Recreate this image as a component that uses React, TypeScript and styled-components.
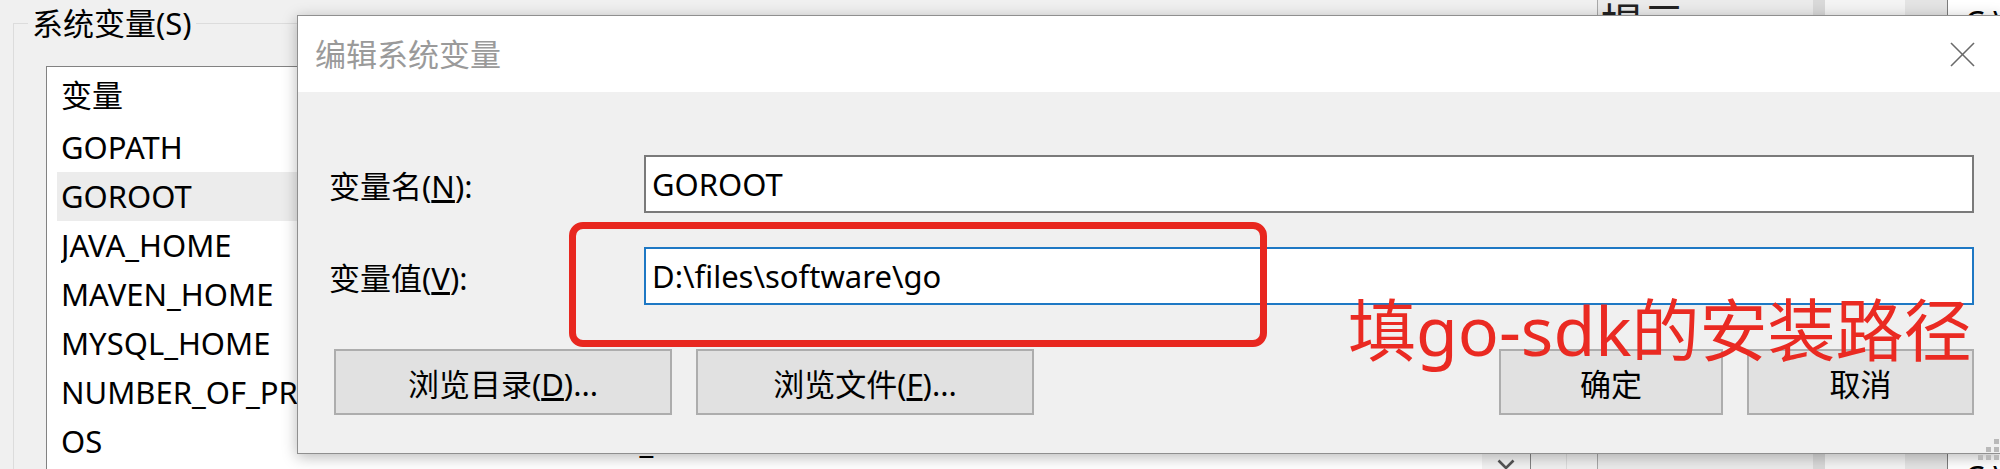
import React from "react";
import styled, { createGlobalStyle } from "styled-components";

const GlobalStyle = createGlobalStyle`
  html, body { margin: 0; padding: 0; }
  body {
    width: 2000px;
    height: 469px;
    overflow: hidden;
    background: #f0f0f0;
    font-family: "Noto Sans", "Noto Sans CJK SC", sans-serif;
  }
`;

const Screen = styled.div`
  position: relative;
  width: 2000px;
  height: 469px;
  overflow: hidden;
  background: #f0f0f0;
  font-size: 31px;
  color: #000;
`;

/* ---------- background window ---------- */

const EnvWindow = styled.div`
  display: flex;
  align-items: flex-start;
  width: 2000px;
  height: 469px;
`;

const SysGroup = styled.fieldset`
  flex: none;
  box-sizing: border-box;
  width: 1554px;
  height: 560px;
  min-width: 0;
  margin: 3px 30px 0 13px;
  padding: 0;
  border: 1px solid #dcdcdc;
`;

const GroupLegend = styled.legend`
  margin-left: 14px;
  padding: 0 4px;
  font-size: 31px;
  line-height: 40px;
  color: #000;
`;

const ListBox = styled.div`
  display: flex;
  box-sizing: border-box;
  width: 1485px;
  height: 424px;
  margin: 23px 0 0 32px;
  border: 1px solid #828282;
  background: #fff;
`;

const ListBody = styled.div`
  flex: 1;
  min-width: 0;
  display: flex;
  flex-direction: column;
`;

const ListHeader = styled.div`
  display: grid;
  grid-template-columns: 446px 1fr;
  align-items: center;
  height: 56px;
  margin-left: 10px;
  padding-left: 4px;
  line-height: 56px;
`;

const ListRow = styled.div<{ $selected?: boolean }>`
  display: grid;
  grid-template-columns: 446px 1fr;
  align-items: center;
  height: 49px;
  margin-left: 10px;
  padding-left: 4px;
  line-height: 49px;
  white-space: nowrap;
  background: ${(p) => (p.$selected ? "#ececec" : "transparent")};
`;

const Cell = styled.span`
  overflow: hidden;
  white-space: nowrap;
`;

const ScrollTrack = styled.div`
  flex: none;
  width: 48px;
  display: flex;
  flex-direction: column;
  justify-content: flex-end;
  background: #f3f3f3;
`;

const ScrollButton = styled.div`
  height: 50px;
  display: flex;
  align-items: center;
  justify-content: center;
`;

const RightWindow = styled.div`
  flex: none;
  display: flex;
  height: 469px;
  border-left: 1px solid #a8a8a8;
`;

const Stripe = styled.div<{ $w: number; $bg: string }>`
  flex: none;
  width: ${(p) => p.$w}px;
  height: 100%;
  background: ${(p) => p.$bg};
`;

const HintText = styled.div`
  padding: 2px 0 0 3px;
  font-size: 42px;
  line-height: 1;
  color: #222;
`;

const PathColumn = styled.div`
  display: flex;
  flex-direction: column;
  gap: 424px;
  padding: 6px 0 0 17px;
  font-size: 31px;
  line-height: 1;
  white-space: nowrap;
`;

/* ---------- dialog ---------- */

const Dialog = styled.div`
  position: absolute;
  left: 297px;
  top: 15px;
  width: 1705px;
  height: 439px;
  box-sizing: border-box;
  display: flex;
  flex-direction: column;
  background: #f0f0f0;
  border: 1px solid #8f8f8f;
  box-shadow: 0 3px 14px rgba(0, 0, 0, 0.28);
`;

const TitleBar = styled.div`
  flex: none;
  height: 76px;
  display: flex;
  align-items: center;
  padding-left: 17px;
  background: #fff;
`;

const TitleText = styled.span`
  font-size: 31px;
  line-height: 1;
  color: #9a9a9a;
`;

const CloseButton = styled.div`
  margin-left: auto;
  width: 78px;
  height: 100%;
  display: flex;
  align-items: center;
  justify-content: center;
`;

const Form = styled.div`
  display: grid;
  grid-template-columns: 315px 1fr;
  row-gap: 34px;
  align-items: center;
  padding: 63px 27px 0 31px;
`;

const FieldLabel = styled.label`
  font-size: 31px;
  white-space: nowrap;
`;

const TextField = styled.input<{ $focused?: boolean }>`
  box-sizing: border-box;
  width: 100%;
  height: 58px;
  margin: 0;
  padding: 0 6px;
  border: 2px solid ${(p) => (p.$focused ? "#1e78c4" : "#7a7a7a")};
  border-radius: 0;
  outline: none;
  background: #fff;
  font-family: "Noto Sans", "Noto Sans CJK SC", sans-serif;
  font-size: 31px;
  color: #000;
`;

const ButtonRow = styled.div`
  display: flex;
  justify-content: space-between;
  margin-top: 44px;
  padding: 0 27px 0 36px;
`;

const ButtonGroup = styled.div`
  display: flex;
  gap: 24px;
`;

const DialogButton = styled.button<{ $w: number }>`
  box-sizing: border-box;
  width: ${(p) => p.$w}px;
  height: 66px;
  padding: 0;
  background: #e1e1e1;
  border: 2px solid #adadad;
  font-family: "Noto Sans", "Noto Sans CJK SC", sans-serif;
  font-size: 31px;
  color: #000;
`;

const Grip = styled.div`
  position: absolute;
  right: 1px;
  bottom: 3px;
  width: 24px;
  height: 22px;
`;

/* ---------- annotations ---------- */

const RedFrame = styled.div`
  position: absolute;
  left: 569px;
  top: 222px;
  width: 698px;
  height: 125px;
  box-sizing: border-box;
  border: 7px solid #e8271f;
  border-radius: 14px;
`;

const RedNote = styled.div`
  position: absolute;
  left: 1348px;
  top: 296px;
  font-family: "Noto Sans", "Noto Sans CJK SC", sans-serif;
  font-size: 68px;
  line-height: 1;
  color: #ea2a22;
  white-space: nowrap;
`;

const rows = [
  { name: "GOPATH", value: "D:\\files\\gopath" },
  { name: "GOROOT", value: "D:\\files\\software\\go", selected: true },
  { name: "JAVA_HOME", value: "C:\\Program Files\\Java\\jdk1.8.0_201" },
  { name: "MAVEN_HOME", value: "D:\\files\\software\\apache-maven-3.6.0" },
  { name: "MYSQL_HOME", value: "D:\\files\\software\\mysql-8.0.15" },
  { name: "NUMBER_OF_PROCESSORS", value: "8" },
  { name: "OS", value: "Windows_NT" },
  { name: "Path", value: "%JAVA_HOME%\\bin;%GOROOT%\\bin" },
];

export default function App() {
  return (
    <>
      <GlobalStyle />
      <Screen>
        <EnvWindow>
          <SysGroup>
            <GroupLegend>系统变量(S)</GroupLegend>
            <ListBox>
              <ListBody>
                <ListHeader>
                  <Cell>变量</Cell>
                  <Cell>值</Cell>
                </ListHeader>
                {rows.map((r) => (
                  <ListRow key={r.name} $selected={r.selected}>
                    <Cell>{r.name}</Cell>
                    <Cell>{r.value}</Cell>
                  </ListRow>
                ))}
              </ListBody>
              <ScrollTrack>
                <ScrollButton>
                  <svg width="18" height="11" viewBox="0 0 18 11">
                    <polyline points="1.5,1.5 9,9 16.5,1.5" fill="none" stroke="#555" strokeWidth="2.6" />
                  </svg>
                </ScrollButton>
              </ScrollTrack>
            </ListBox>
          </SysGroup>
          <RightWindow>
            <Stripe $w={215} $bg="#ebebeb">
              <HintText>提示</HintText>
            </Stripe>
            <Stripe $w={12} $bg="#d9d9d9" />
            <Stripe $w={80} $bg="#f4f4f4" />
            <Stripe $w={42} $bg="#e4e4e4" />
            <Stripe $w={1} $bg="#7c7c7c" />
            <Stripe $w={52} $bg="#ffffff">
              <PathColumn>
                <span>C:\</span>
                <span>C:\</span>
              </PathColumn>
            </Stripe>
          </RightWindow>
        </EnvWindow>

        <Dialog>
          <TitleBar>
            <TitleText>编辑系统变量</TitleText>
            <CloseButton>
              <svg width="25" height="25" viewBox="0 0 25 25">
                <line x1="1" y1="1" x2="24" y2="24" stroke="#6a6a6a" strokeWidth="1.6" />
                <line x1="24" y1="1" x2="1" y2="24" stroke="#6a6a6a" strokeWidth="1.6" />
              </svg>
            </CloseButton>
          </TitleBar>
          <Form>
            <FieldLabel>
              变量名(<u>N</u>):
            </FieldLabel>
            <TextField readOnly value="GOROOT" />
            <FieldLabel>
              变量值(<u>V</u>):
            </FieldLabel>
            <TextField readOnly $focused value="D:\files\software\go" />
          </Form>
          <ButtonRow>
            <ButtonGroup>
              <DialogButton $w={338}>
                浏览目录(<u>D</u>)...
              </DialogButton>
              <DialogButton $w={338}>
                浏览文件(<u>F</u>)...
              </DialogButton>
            </ButtonGroup>
            <ButtonGroup>
              <DialogButton $w={224}>确定</DialogButton>
              <DialogButton $w={227}>取消</DialogButton>
            </ButtonGroup>
          </ButtonRow>
          <Grip>
            <svg width="24" height="22" viewBox="0 0 24 22">
              <g fill="#b9b9b9">
                <rect x="18" y="0" width="5" height="5" />
                <rect x="10" y="8" width="5" height="5" />
                <rect x="18" y="8" width="5" height="5" />
                <rect x="2" y="16" width="5" height="5" />
                <rect x="10" y="16" width="5" height="5" />
                <rect x="18" y="16" width="5" height="5" />
              </g>
            </svg>
          </Grip>
        </Dialog>

        <RedFrame />
        <RedNote>填go-sdk的安装路径</RedNote>
      </Screen>
    </>
  );
}
